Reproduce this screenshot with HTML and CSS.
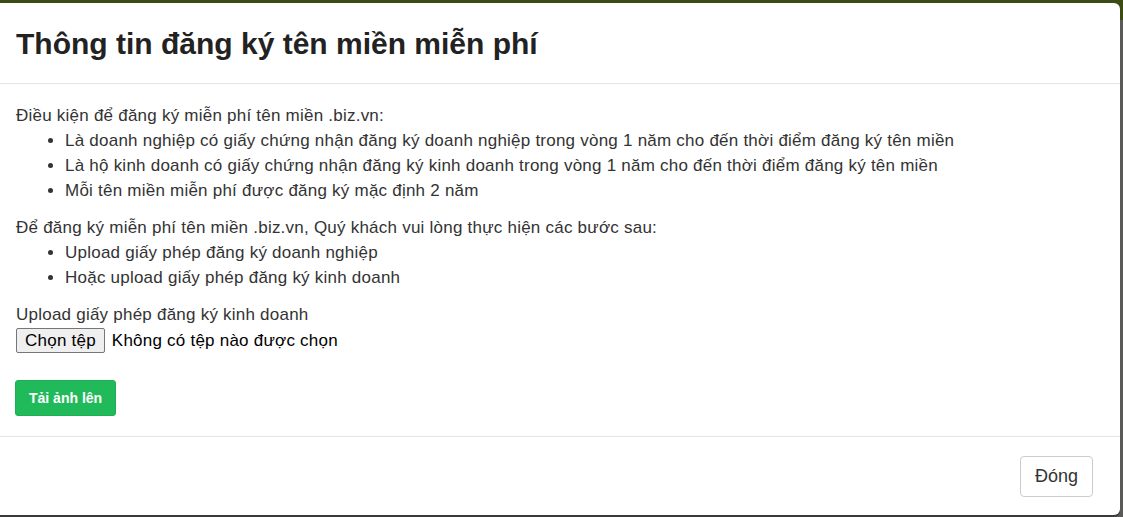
FILE: index.html
```html
<!DOCTYPE html>
<html lang="vi">
<head>
    <meta charset="UTF-8">
    <meta name="viewport" content="width=device-width, initial-scale=1.0">
    <title>Thông tin đăng ký tên miền miễn phí</title>
    <link rel="stylesheet" href="styles.css">
</head>
<body>
    <div class="modal">
        <div class="modal-header">
            <h2 class="modal-title">Thông tin đăng ký tên miền miễn phí</h2>
        </div>
        <div class="modal-body">
            <p>Điều kiện để đăng ký miễn phí tên miền .biz.vn:</p>
            <ul>
                <li>Là doanh nghiệp có giấy chứng nhận đăng ký doanh nghiệp trong vòng 1 năm cho đến thời điểm đăng ký tên miền</li>
                <li>Là hộ kinh doanh có giấy chứng nhận đăng ký kinh doanh trong vòng 1 năm cho đến thời điểm đăng ký tên miền</li>
                <li>Mỗi tên miền miễn phí được đăng ký mặc định 2 năm</li>
            </ul>
            <p>Để đăng ký miễn phí tên miền .biz.vn, Quý khách vui lòng thực hiện các bước sau:</p>
            <ul>
                <li>Upload giấy phép đăng ký doanh nghiệp</li>
                <li>Hoặc upload giấy phép đăng ký kinh doanh</li>
            </ul>
            <div class="form-group">
                <label>Upload giấy phép đăng ký kinh doanh</label>
                <div class="file-input">
                    <span class="file-btn">Chọn tệp</span>
                    <span class="file-name">Không có tệp nào được chọn</span>
                </div>
            </div>
            <button type="button" class="btn-upload">Tải ảnh lên</button>
        </div>
        <div class="modal-footer">
            <button type="button" class="btn-close">Đóng</button>
        </div>
    </div>
</body>
</html>
```

FILE: styles.css
```css
html, body {
    margin: 0;
    padding: 0;
}
body {
    font-family: "Liberation Sans", Arial, sans-serif;
    font-size: 16px;
    color: #333;
    height: 517px;
    overflow: hidden;
    background: linear-gradient(#3c4a14 0, #3c4a14 20px, #5a5a58 20px, #5a5a58 100%);
}
.modal {
    width: 1120px;
    height: 512px;
    margin-top: 3px;
    background-color: #fff;
    border-radius: 0 6px 6px 0;
    box-shadow: 0 2px 0 #3a3a3a;
    display: flex;
    flex-direction: column;
}
.modal-header {
    height: 81px;
    box-sizing: border-box;
    padding: 1px 16px 0;
    display: flex;
    align-items: center;
    border-bottom: 1px solid #e5e5e5;
}
.modal-title {
    margin: 0;
    font-size: 30px;
    font-weight: bold;
    color: #222;
    line-height: 1.1;
}
.modal-body {
    flex: 1;
    padding: 19px 16px 0;
    font-size: 17px;
    letter-spacing: 0.23px;
    line-height: 25px;
}
.modal-body p {
    margin: 0;
}
.modal-body ul {
    margin: 0 0 12px;
    padding-left: 49px;
}
.form-group {
    margin-top: 1px;
    margin-bottom: 27px;
}
.form-group label {
    display: block;
    margin-bottom: 1px;
}
.file-input {
    display: flex;
    align-items: center;
    gap: 7px;
}
.file-btn {
    display: inline-block;
    background-color: #efefef;
    border: 1px solid #767676;
    border-radius: 2px;
    padding: 0 8px;
    line-height: 23px;
    color: #000;
}
.file-name {
    color: #000;
}
.btn-upload {
    font-family: inherit;
    font-size: 14px;
    font-weight: bold;
    letter-spacing: 0;
    color: #fff;
    background-color: #21ba5a;
    border: 1px solid #1fae54;
    border-radius: 3px;
    padding: 7px 13px;
    line-height: 20px;
    margin-left: -1px;
    cursor: pointer;
}
.modal-footer {
    height: 79px;
    box-sizing: border-box;
    padding: 19px 27px 0 20px;
    border-top: 1px solid #e5e5e5;
    display: flex;
    justify-content: flex-end;
    align-items: flex-start;
}
.btn-close {
    font-family: inherit;
    font-size: 18px;
    color: #333;
    background-color: #fff;
    border: 1px solid #ccc;
    border-radius: 4px;
    padding: 7px 14px;
    line-height: 25px;
    cursor: pointer;
}
```
